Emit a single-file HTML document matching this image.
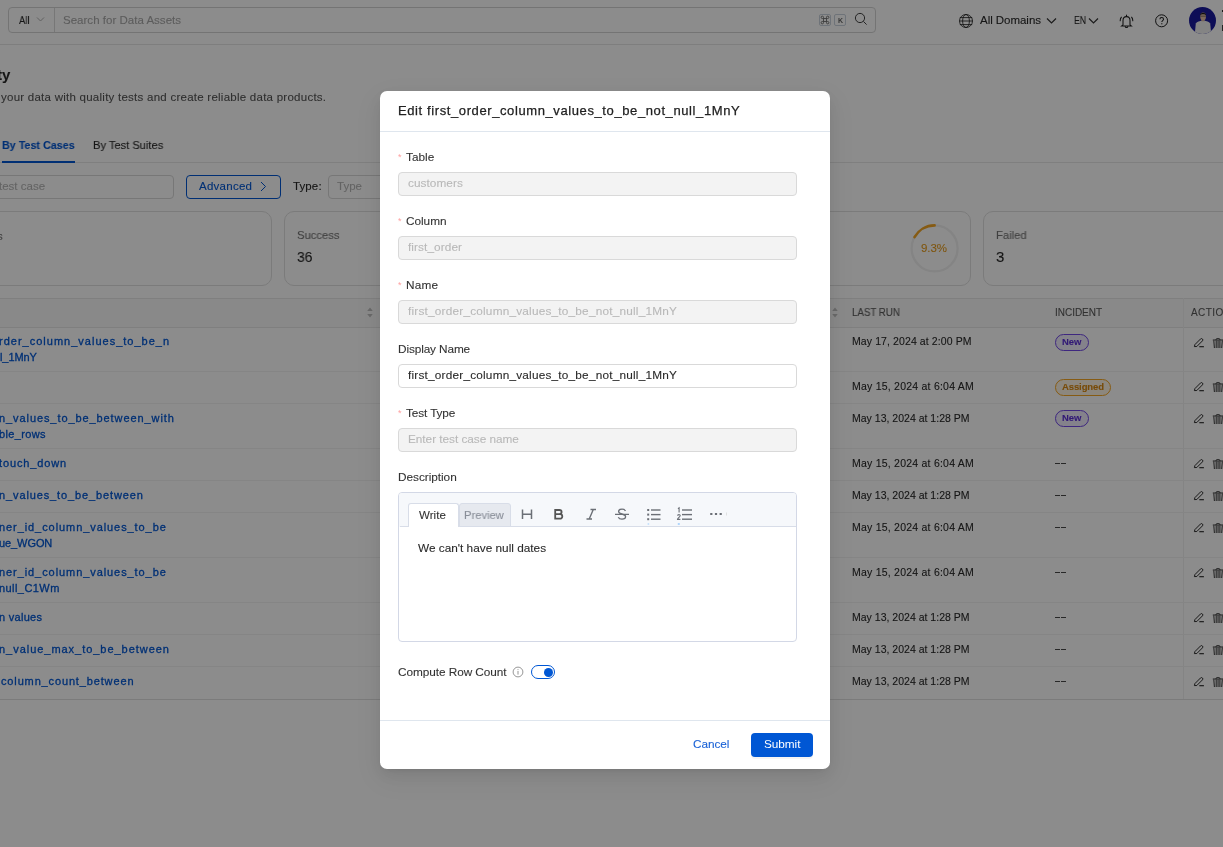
<!DOCTYPE html>
<html><head><meta charset="utf-8"><title>Edit test case</title>
<style>
html,body{margin:0;padding:0;}
body{width:1223px;height:847px;overflow:hidden;position:relative;background:#fff;font-family:"Liberation Sans",sans-serif;}
.t{position:absolute;white-space:nowrap;will-change:transform;-webkit-text-stroke:0.1px;}
.r{position:absolute;}
#page{position:absolute;left:0;top:0;width:1223px;height:847px;overflow:hidden;}
</style></head><body>
<div id="page">
<div class="r" style="left:0px;top:0px;width:1223px;height:44px;background:#fff;border-bottom:1px solid #e6e6e6;box-sizing:border-box;height:45px;"></div>
<div class="r" style="left:8px;top:7px;width:868px;height:26px;border:1px solid #d4d4d4;border-radius:4px;box-sizing:border-box;"></div>
<div class="r" style="left:54px;top:8px;width:1px;height:24px;background:#d9d9d9;"></div>
<div class="t" style="top:13.50px;font-size:11.5px;line-height:12px;color:#292929;left:19.00px;transform:scaleX(0.8203);transform-origin:0.00px 0;">All</div>
<svg class="r" style="left:36px;top:16px" width="9" height="7" viewBox="0 0 9 7"><path d="M1 1.5 L4.5 5 L8 1.5" fill="none" stroke="#b0b0b0" stroke-width="1"/></svg>
<div class="t" style="top:13.50px;font-size:11.5px;line-height:12px;color:#a8a8a8;letter-spacing:0.019px;left:63.00px;">Search for Data Assets</div>
<div class="r" style="left:819px;top:14px;width:12px;height:12px;border:1px solid #c9d2dc;border-radius:2px;box-sizing:border-box;"></div>
<svg class="r" style="left:819px;top:14px" width="12" height="12" viewBox="0 0 12 12"><path d="M4.5 4.5 H7.5 V7.5 H4.5 Z M4.5 4.5 V3.3 A1.2 1.2 0 1 0 3.3 4.5 H4.5 M7.5 4.5 V3.3 A1.2 1.2 0 1 1 8.7 4.5 H7.5 M4.5 7.5 V8.7 A1.2 1.2 0 1 1 3.3 7.5 H4.5 M7.5 7.5 V8.7 A1.2 1.2 0 1 0 8.7 7.5 H7.5" fill="none" stroke="#666" stroke-width="0.85"/></svg>
<div class="r" style="left:834px;top:14px;width:12px;height:12px;border:1px solid #c9d2dc;border-radius:2px;box-sizing:border-box;"></div>
<div class="t" style="top:16.50px;font-size:7px;line-height:7px;color:#666;font-weight:bold;left:838.00px;-webkit-text-stroke:0;">K</div>
<svg class="r" style="left:854px;top:12px" width="14" height="14" viewBox="0 0 14 14"><circle cx="6" cy="6" r="4.6" fill="none" stroke="#3a3a3a" stroke-width="0.95"/><path d="M9.4 9.4 L12.6 12.6" stroke="#3a3a3a" stroke-width="0.95"/></svg>
<svg class="r" style="left:958px;top:13px" width="16" height="16" viewBox="0 0 16 16"><g fill="none" stroke="#222" stroke-width="0.85"><circle cx="8" cy="8" r="6.5"/><ellipse cx="8" cy="8" rx="3.4" ry="6.5"/><path d="M1.8 4.6 H14.2 M1.5 8 H14.5 M1.8 11.6 H14.2"/></g></svg>
<div class="t" style="top:14.30px;font-size:11.5px;line-height:12px;color:#292929;letter-spacing:-0.035px;left:980.00px;">All Domains</div>
<svg class="r" style="left:1046px;top:17px" width="11" height="8" viewBox="0 0 11 8"><path d="M1 1.5 L5.5 6 L10 1.5" fill="none" stroke="#333" stroke-width="1.2"/></svg>
<div class="t" style="top:14.30px;font-size:10.5px;line-height:12px;color:#292929;left:1074.00px;transform:scaleX(0.8219);transform-origin:0.00px 0;">EN</div>
<svg class="r" style="left:1088px;top:17px" width="11" height="8" viewBox="0 0 11 8"><path d="M1 1.5 L5.5 6 L10 1.5" fill="none" stroke="#333" stroke-width="1.2"/></svg>
<svg class="r" style="left:1119px;top:13px" width="15" height="16" viewBox="0 0 15 16"><g fill="none" stroke="#1e1e1e" stroke-width="1.05" stroke-linecap="round"><path d="M4 11.8 V7.6 C4 5.2 5.5 3.6 7.5 3.6 C9.5 3.6 11 5.2 11 7.6 V11.8 L12.4 13 H2.6 Z"/><path d="M6.2 13.4 C6.2 14.8 8.8 14.8 8.8 13.4"/><path d="M2.4 4.2 C1.6 5.2 1.2 6.4 1.2 7.8 M12.6 4.2 C13.4 5.2 13.8 6.4 13.8 7.8"/><path d="M7.5 2 V3.4"/></g></svg>
<svg class="r" style="left:1155px;top:14px" width="14" height="14" viewBox="0 0 14 14"><circle cx="6.6" cy="6.8" r="6" fill="none" stroke="#1e1e1e" stroke-width="1"/><path d="M4.9 5.3 C4.9 4.1 5.7 3.5 6.7 3.5 C7.7 3.5 8.5 4.2 8.5 5.2 C8.5 6.5 6.8 6.6 6.8 8.1" fill="none" stroke="#1e1e1e" stroke-width="1.05"/><rect x="6.25" y="9.2" width="1.1" height="1.1" fill="#1e1e1e"/></svg>
<svg class="r" style="left:1189px;top:7px" width="27" height="27" viewBox="0 0 27 27"><defs><clipPath id="av"><circle cx="13.5" cy="13.5" r="13.5"/></clipPath></defs><circle cx="13.5" cy="13.5" r="13.5" fill="#1a1a9e"/><g clip-path="url(#av)"><path d="M5.8 27 L6.8 16.5 C8 14.6 10.6 13.8 13.4 13.4 L14.8 13.4 C17.6 13.8 20 14.6 21.2 16.5 L22.2 27 Z" fill="#f0f0f0"/><path d="M12.4 11.5 H15.6 V14.2 H12.4 Z" fill="#d9b49c"/><ellipse cx="14.1" cy="9.4" rx="2.9" ry="3.9" fill="#e3bfa6"/><path d="M11.1 8.6 C10.8 5 17.4 4.8 17.1 8.6 C16.4 6.9 11.9 6.9 11.1 8.6 Z" fill="#1b1b1b"/><path d="M11.3 9.2 H16.9" stroke="#333" stroke-width="0.55"/></g></svg>
<div class="r" style="left:1221.5px;top:10px;width:1.5px;height:2px;background:#333;"></div>
<div class="r" style="left:1221.5px;top:25px;width:1.5px;height:6px;background:#444;"></div>
<div class="t" style="top:65.60px;font-size:15px;line-height:17px;color:#292929;font-weight:bold;right:1212.81px;">ty</div>
<div class="t" style="top:91.00px;font-size:11.5px;line-height:12px;color:#555;letter-spacing:0.252px;left:1.00px;">your data with quality tests and create reliable data products.</div>
<div class="t" style="top:139.20px;font-size:11.5px;line-height:12px;color:#0057d4;font-weight:bold;left:2.00px;transform:scaleX(0.9338);transform-origin:0.00px 0;">By Test Cases</div>
<div class="t" style="top:139.20px;font-size:11.5px;line-height:12px;color:#292929;left:92.60px;transform:scaleX(0.9663);transform-origin:0.00px 0;">By Test Suites</div>
<div class="r" style="left:0px;top:162px;width:1223px;height:1px;background:#e8e8e8;"></div>
<div class="r" style="left:2px;top:161px;width:73px;height:2px;background:#0057d4;"></div>
<div class="r" style="left:-10px;top:175px;width:183.5px;height:24px;border:1px solid #d9d9d9;border-radius:4px;box-sizing:border-box;"></div>
<div class="t" style="top:180.20px;font-size:11.5px;line-height:12px;color:#b5b5b5;right:1177.98px;">test case</div>
<div class="r" style="left:186px;top:175px;width:95px;height:24px;border:1px solid #0057d4;border-radius:4px;box-sizing:border-box;"></div>
<div class="t" style="top:180.20px;font-size:11.5px;line-height:12px;color:#0057d4;letter-spacing:0.264px;left:199.00px;">Advanced</div>
<svg class="r" style="left:259px;top:181px" width="9" height="11" viewBox="0 0 9 11"><path d="M2 1 L6.5 5.5 L2 10" fill="none" stroke="#0057d4" stroke-width="1"/></svg>
<div class="t" style="top:180.20px;font-size:11.5px;line-height:12px;color:#292929;letter-spacing:0.112px;left:293.00px;">Type:</div>
<div class="r" style="left:328px;top:175px;width:120px;height:24px;border:1px solid #d9d9d9;border-radius:4px;box-sizing:border-box;"></div>
<div class="t" style="top:180.20px;font-size:11.5px;line-height:12px;color:#b5b5b5;letter-spacing:0.017px;left:337.00px;">Type</div>
<div class="r" style="left:-20px;top:211px;width:292px;height:75px;border:1px solid #e0e0e0;border-radius:10px;box-sizing:border-box;"></div>
<div class="t" style="top:230.00px;font-size:11.5px;line-height:12px;color:#757575;right:1220.51px;">Tests</div>
<div class="r" style="left:284px;top:211px;width:300px;height:75px;border:1px solid #e0e0e0;border-radius:10px;box-sizing:border-box;"></div>
<div class="t" style="top:229.20px;font-size:11.5px;line-height:12px;color:#757575;left:296.80px;transform:scaleX(0.9781);transform-origin:0.00px 0;">Success</div>
<div class="t" style="top:248.20px;font-size:15px;line-height:17px;color:#292929;left:296.80px;transform:scaleX(0.9281);transform-origin:0.00px 0;">36</div>
<div class="r" style="left:600px;top:211px;width:371px;height:75px;border:1px solid #e0e0e0;border-radius:10px;box-sizing:border-box;"></div>
<svg class="r" style="left:908px;top:222px" width="54" height="54" viewBox="0 0 54 54"><circle cx="26.6" cy="26.4" r="23" fill="none" stroke="#f0f0f0" stroke-width="2.2"/><path d="M26.6 3.4 A23 23 0 0 0 6.5 15.2" fill="none" stroke="#f5a623" stroke-width="2.6" stroke-linecap="round"/></svg>
<div class="t" style="top:242.40px;font-size:11.5px;line-height:12px;color:#e69a1a;letter-spacing:-0.067px;left:921.00px;">9.3%</div>
<div class="r" style="left:983px;top:211px;width:300px;height:75px;border:1px solid #e0e0e0;border-radius:10px;box-sizing:border-box;"></div>
<div class="t" style="top:229.40px;font-size:11.5px;line-height:12px;color:#757575;left:996.40px;transform:scaleX(0.9776);transform-origin:0.00px 0;">Failed</div>
<div class="t" style="top:247.90px;font-size:15px;line-height:17px;color:#292929;left:996.40px;">3</div>
<div class="r" style="left:0px;top:298px;width:1223px;height:30px;background:#fafafa;border-top:1px solid #e8e8e8;border-bottom:1px solid #e8e8e8;box-sizing:border-box;"></div>
<svg class="r" style="left:366.5px;top:307px" width="6" height="11" viewBox="0 0 6 11"><path d="M3 0.6 L5.8 4 H0.2 Z M3 10.4 L5.8 7 H0.2 Z" fill="#bfbfbf"/></svg>
<svg class="r" style="left:832.4px;top:307px" width="6" height="11" viewBox="0 0 6 11"><path d="M3 0.6 L5.8 4 H0.2 Z M3 10.4 L5.8 7 H0.2 Z" fill="#bfbfbf"/></svg>
<div class="t" style="top:307.10px;font-size:10px;line-height:11px;color:#595959;left:851.70px;transform:scaleX(0.9726);transform-origin:0.00px 0;">LAST RUN</div>
<div class="t" style="top:307.10px;font-size:10px;line-height:11px;color:#595959;letter-spacing:-0.029px;left:1055.00px;">INCIDENT</div>
<div class="t" style="top:307.10px;font-size:10px;line-height:11px;color:#595959;left:1191.00px;letter-spacing:0.4px;">ACTIONS</div>
<div class="r" style="left:1183px;top:298px;width:1px;height:401px;background:#f0f0f0;"></div>
<div class="r" style="left:0px;top:371px;width:1223px;height:1px;background:#f2f2f2;"></div>
<div class="r" style="left:0px;top:403px;width:1223px;height:1px;background:#f2f2f2;"></div>
<div class="r" style="left:0px;top:448px;width:1223px;height:1px;background:#f2f2f2;"></div>
<div class="r" style="left:0px;top:480px;width:1223px;height:1px;background:#f2f2f2;"></div>
<div class="r" style="left:0px;top:512px;width:1223px;height:1px;background:#f2f2f2;"></div>
<div class="r" style="left:0px;top:557px;width:1223px;height:1px;background:#f2f2f2;"></div>
<div class="r" style="left:0px;top:602px;width:1223px;height:1px;background:#f2f2f2;"></div>
<div class="r" style="left:0px;top:634px;width:1223px;height:1px;background:#f2f2f2;"></div>
<div class="r" style="left:0px;top:666px;width:1223px;height:1px;background:#f2f2f2;"></div>
<div class="r" style="left:0px;top:699px;width:1223px;height:1px;background:#e0e0e0;"></div>
<div class="t" style="top:335.30px;font-size:11px;line-height:12px;color:#0057d4;letter-spacing:1.006px;right:1052.50px;-webkit-text-stroke:0.3px #0057d4;">rder_column_values_to_be_n</div>
<div class="t" style="top:351.30px;font-size:11px;line-height:12px;color:#0057d4;letter-spacing:-0.080px;right:1185.78px;-webkit-text-stroke:0.3px #0057d4;">l_1MnY</div>
<div class="t" style="top:335.30px;font-size:10.5px;line-height:12px;color:#292929;letter-spacing:0.100px;left:851.70px;">May 17, 2024 at 2:00 PM</div>
<div class="r" style="left:1055px;top:334px;width:34px;height:16.5px;border:1px solid #7147e8;background:#f1edfd;border-radius:9px;box-sizing:border-box;"></div>
<div class="t" style="top:335.80px;font-size:9.5px;line-height:11px;color:#5b2fd6;font-weight:bold;letter-spacing:-0.050px;left:1062.00px;">New</div>
<svg class="r" style="left:1193px;top:337px" width="12" height="12" viewBox="0 0 12 12"><g fill="none" stroke="#222" stroke-width="0.95"><path d="M1.4 9.6 L1.9 7.6 L7.6 1.9 A1.35 1.35 0 0 1 9.5 3.8 L3.8 9.5 Z"/><path d="M6.3 9.7 H10.9" stroke-width="1.1"/></g></svg>
<svg class="r" style="left:1211.5px;top:337px" width="12" height="12" viewBox="0 0 12 12"><g fill="none" stroke="#222" stroke-width="0.9"><path d="M0.8 3 H11.2 M3.8 3 C3.8 1 8.2 1 8.2 3"/><path d="M1.8 3.5 L2.4 11 M4.2 3.5 V11 M6.05 3.5 V11 M7.9 3.5 V11 M10.3 3.5 L9.7 11"/></g></svg>
<div class="t" style="top:379.70px;font-size:10.5px;line-height:12px;color:#292929;letter-spacing:0.230px;left:851.70px;">May 15, 2024 at 6:04 AM</div>
<div class="r" style="left:1055px;top:378.5px;width:56px;height:17px;border:1px solid #f5a623;background:#fff6e6;border-radius:9px;box-sizing:border-box;"></div>
<div class="t" style="top:381.00px;font-size:9.5px;line-height:11px;color:#d9880f;font-weight:bold;letter-spacing:-0.107px;left:1062.00px;">Assigned</div>
<svg class="r" style="left:1193px;top:381px" width="12" height="12" viewBox="0 0 12 12"><g fill="none" stroke="#222" stroke-width="0.95"><path d="M1.4 9.6 L1.9 7.6 L7.6 1.9 A1.35 1.35 0 0 1 9.5 3.8 L3.8 9.5 Z"/><path d="M6.3 9.7 H10.9" stroke-width="1.1"/></g></svg>
<svg class="r" style="left:1211.5px;top:381px" width="12" height="12" viewBox="0 0 12 12"><g fill="none" stroke="#222" stroke-width="0.9"><path d="M0.8 3 H11.2 M3.8 3 C3.8 1 8.2 1 8.2 3"/><path d="M1.8 3.5 L2.4 11 M4.2 3.5 V11 M6.05 3.5 V11 M7.9 3.5 V11 M10.3 3.5 L9.7 11"/></g></svg>
<div class="t" style="top:411.70px;font-size:11px;line-height:12px;color:#0057d4;letter-spacing:0.917px;right:1047.77px;-webkit-text-stroke:0.3px #0057d4;">n_values_to_be_between_with</div>
<div class="t" style="top:427.70px;font-size:11px;line-height:12px;color:#0057d4;letter-spacing:0.371px;right:1176.61px;-webkit-text-stroke:0.3px #0057d4;">ble_rows</div>
<div class="t" style="top:411.70px;font-size:10.5px;line-height:12px;color:#292929;letter-spacing:0.009px;left:851.70px;">May 13, 2024 at 1:28 PM</div>
<div class="r" style="left:1055px;top:410px;width:34px;height:16.5px;border:1px solid #7147e8;background:#f1edfd;border-radius:9px;box-sizing:border-box;"></div>
<div class="t" style="top:412.20px;font-size:9.5px;line-height:11px;color:#5b2fd6;font-weight:bold;letter-spacing:-0.050px;left:1062.00px;">New</div>
<svg class="r" style="left:1193px;top:413px" width="12" height="12" viewBox="0 0 12 12"><g fill="none" stroke="#222" stroke-width="0.95"><path d="M1.4 9.6 L1.9 7.6 L7.6 1.9 A1.35 1.35 0 0 1 9.5 3.8 L3.8 9.5 Z"/><path d="M6.3 9.7 H10.9" stroke-width="1.1"/></g></svg>
<svg class="r" style="left:1211.5px;top:413px" width="12" height="12" viewBox="0 0 12 12"><g fill="none" stroke="#222" stroke-width="0.9"><path d="M0.8 3 H11.2 M3.8 3 C3.8 1 8.2 1 8.2 3"/><path d="M1.8 3.5 L2.4 11 M4.2 3.5 V11 M6.05 3.5 V11 M7.9 3.5 V11 M10.3 3.5 L9.7 11"/></g></svg>
<div class="t" style="top:456.70px;font-size:11px;line-height:12px;color:#0057d4;letter-spacing:0.872px;right:1155.55px;-webkit-text-stroke:0.3px #0057d4;">touch_down</div>
<div class="t" style="top:456.70px;font-size:10.5px;line-height:12px;color:#292929;letter-spacing:0.230px;left:851.70px;">May 15, 2024 at 6:04 AM</div>
<div class="r" style="left:1054.8px;top:463.2px;width:5.4px;height:1.1px;background:#4a4a4a;"></div>
<div class="r" style="left:1061.4px;top:463.2px;width:4.8px;height:1.1px;background:#4a4a4a;"></div>
<svg class="r" style="left:1193px;top:458px" width="12" height="12" viewBox="0 0 12 12"><g fill="none" stroke="#222" stroke-width="0.95"><path d="M1.4 9.6 L1.9 7.6 L7.6 1.9 A1.35 1.35 0 0 1 9.5 3.8 L3.8 9.5 Z"/><path d="M6.3 9.7 H10.9" stroke-width="1.1"/></g></svg>
<svg class="r" style="left:1211.5px;top:458px" width="12" height="12" viewBox="0 0 12 12"><g fill="none" stroke="#222" stroke-width="0.9"><path d="M0.8 3 H11.2 M3.8 3 C3.8 1 8.2 1 8.2 3"/><path d="M1.8 3.5 L2.4 11 M4.2 3.5 V11 M6.05 3.5 V11 M7.9 3.5 V11 M10.3 3.5 L9.7 11"/></g></svg>
<div class="t" style="top:488.70px;font-size:11px;line-height:12px;color:#0057d4;letter-spacing:0.881px;right:1078.83px;-webkit-text-stroke:0.3px #0057d4;">n_values_to_be_between</div>
<div class="t" style="top:488.70px;font-size:10.5px;line-height:12px;color:#292929;letter-spacing:0.009px;left:851.70px;">May 13, 2024 at 1:28 PM</div>
<div class="r" style="left:1054.8px;top:495.2px;width:5.4px;height:1.1px;background:#4a4a4a;"></div>
<div class="r" style="left:1061.4px;top:495.2px;width:4.8px;height:1.1px;background:#4a4a4a;"></div>
<svg class="r" style="left:1193px;top:490px" width="12" height="12" viewBox="0 0 12 12"><g fill="none" stroke="#222" stroke-width="0.95"><path d="M1.4 9.6 L1.9 7.6 L7.6 1.9 A1.35 1.35 0 0 1 9.5 3.8 L3.8 9.5 Z"/><path d="M6.3 9.7 H10.9" stroke-width="1.1"/></g></svg>
<svg class="r" style="left:1211.5px;top:490px" width="12" height="12" viewBox="0 0 12 12"><g fill="none" stroke="#222" stroke-width="0.9"><path d="M0.8 3 H11.2 M3.8 3 C3.8 1 8.2 1 8.2 3"/><path d="M1.8 3.5 L2.4 11 M4.2 3.5 V11 M6.05 3.5 V11 M7.9 3.5 V11 M10.3 3.5 L9.7 11"/></g></svg>
<div class="t" style="top:520.70px;font-size:11px;line-height:12px;color:#0057d4;letter-spacing:0.924px;right:1055.86px;-webkit-text-stroke:0.3px #0057d4;">ner_id_column_values_to_be</div>
<div class="t" style="top:536.70px;font-size:11px;line-height:12px;color:#0057d4;letter-spacing:-0.083px;right:1170.39px;-webkit-text-stroke:0.3px #0057d4;">ue_WGON</div>
<div class="t" style="top:520.70px;font-size:10.5px;line-height:12px;color:#292929;letter-spacing:0.230px;left:851.70px;">May 15, 2024 at 6:04 AM</div>
<div class="r" style="left:1054.8px;top:527.2px;width:5.4px;height:1.1px;background:#4a4a4a;"></div>
<div class="r" style="left:1061.4px;top:527.2px;width:4.8px;height:1.1px;background:#4a4a4a;"></div>
<svg class="r" style="left:1193px;top:522px" width="12" height="12" viewBox="0 0 12 12"><g fill="none" stroke="#222" stroke-width="0.95"><path d="M1.4 9.6 L1.9 7.6 L7.6 1.9 A1.35 1.35 0 0 1 9.5 3.8 L3.8 9.5 Z"/><path d="M6.3 9.7 H10.9" stroke-width="1.1"/></g></svg>
<svg class="r" style="left:1211.5px;top:522px" width="12" height="12" viewBox="0 0 12 12"><g fill="none" stroke="#222" stroke-width="0.9"><path d="M0.8 3 H11.2 M3.8 3 C3.8 1 8.2 1 8.2 3"/><path d="M1.8 3.5 L2.4 11 M4.2 3.5 V11 M6.05 3.5 V11 M7.9 3.5 V11 M10.3 3.5 L9.7 11"/></g></svg>
<div class="t" style="top:565.70px;font-size:11px;line-height:12px;color:#0057d4;letter-spacing:0.924px;right:1055.86px;-webkit-text-stroke:0.3px #0057d4;">ner_id_column_values_to_be</div>
<div class="t" style="top:581.70px;font-size:11px;line-height:12px;color:#0057d4;letter-spacing:0.431px;right:1162.87px;-webkit-text-stroke:0.3px #0057d4;">null_C1Wm</div>
<div class="t" style="top:565.70px;font-size:10.5px;line-height:12px;color:#292929;letter-spacing:0.230px;left:851.70px;">May 15, 2024 at 6:04 AM</div>
<div class="r" style="left:1054.8px;top:572.2px;width:5.4px;height:1.1px;background:#4a4a4a;"></div>
<div class="r" style="left:1061.4px;top:572.2px;width:4.8px;height:1.1px;background:#4a4a4a;"></div>
<svg class="r" style="left:1193px;top:567px" width="12" height="12" viewBox="0 0 12 12"><g fill="none" stroke="#222" stroke-width="0.95"><path d="M1.4 9.6 L1.9 7.6 L7.6 1.9 A1.35 1.35 0 0 1 9.5 3.8 L3.8 9.5 Z"/><path d="M6.3 9.7 H10.9" stroke-width="1.1"/></g></svg>
<svg class="r" style="left:1211.5px;top:567px" width="12" height="12" viewBox="0 0 12 12"><g fill="none" stroke="#222" stroke-width="0.9"><path d="M0.8 3 H11.2 M3.8 3 C3.8 1 8.2 1 8.2 3"/><path d="M1.8 3.5 L2.4 11 M4.2 3.5 V11 M6.05 3.5 V11 M7.9 3.5 V11 M10.3 3.5 L9.7 11"/></g></svg>
<div class="t" style="top:610.70px;font-size:11px;line-height:12px;color:#0057d4;letter-spacing:0.279px;right:1180.40px;-webkit-text-stroke:0.3px #0057d4;">n values</div>
<div class="t" style="top:610.70px;font-size:10.5px;line-height:12px;color:#292929;letter-spacing:0.009px;left:851.70px;">May 13, 2024 at 1:28 PM</div>
<div class="r" style="left:1054.8px;top:617.2px;width:5.4px;height:1.1px;background:#4a4a4a;"></div>
<div class="r" style="left:1061.4px;top:617.2px;width:4.8px;height:1.1px;background:#4a4a4a;"></div>
<svg class="r" style="left:1193px;top:612px" width="12" height="12" viewBox="0 0 12 12"><g fill="none" stroke="#222" stroke-width="0.95"><path d="M1.4 9.6 L1.9 7.6 L7.6 1.9 A1.35 1.35 0 0 1 9.5 3.8 L3.8 9.5 Z"/><path d="M6.3 9.7 H10.9" stroke-width="1.1"/></g></svg>
<svg class="r" style="left:1211.5px;top:612px" width="12" height="12" viewBox="0 0 12 12"><g fill="none" stroke="#222" stroke-width="0.9"><path d="M0.8 3 H11.2 M3.8 3 C3.8 1 8.2 1 8.2 3"/><path d="M1.8 3.5 L2.4 11 M4.2 3.5 V11 M6.05 3.5 V11 M7.9 3.5 V11 M10.3 3.5 L9.7 11"/></g></svg>
<div class="t" style="top:642.70px;font-size:11px;line-height:12px;color:#0057d4;letter-spacing:0.967px;right:1052.65px;-webkit-text-stroke:0.3px #0057d4;">n_value_max_to_be_between</div>
<div class="t" style="top:642.70px;font-size:10.5px;line-height:12px;color:#292929;letter-spacing:0.009px;left:851.70px;">May 13, 2024 at 1:28 PM</div>
<div class="r" style="left:1054.8px;top:649.2px;width:5.4px;height:1.1px;background:#4a4a4a;"></div>
<div class="r" style="left:1061.4px;top:649.2px;width:4.8px;height:1.1px;background:#4a4a4a;"></div>
<svg class="r" style="left:1193px;top:644px" width="12" height="12" viewBox="0 0 12 12"><g fill="none" stroke="#222" stroke-width="0.95"><path d="M1.4 9.6 L1.9 7.6 L7.6 1.9 A1.35 1.35 0 0 1 9.5 3.8 L3.8 9.5 Z"/><path d="M6.3 9.7 H10.9" stroke-width="1.1"/></g></svg>
<svg class="r" style="left:1211.5px;top:644px" width="12" height="12" viewBox="0 0 12 12"><g fill="none" stroke="#222" stroke-width="0.9"><path d="M0.8 3 H11.2 M3.8 3 C3.8 1 8.2 1 8.2 3"/><path d="M1.8 3.5 L2.4 11 M4.2 3.5 V11 M6.05 3.5 V11 M7.9 3.5 V11 M10.3 3.5 L9.7 11"/></g></svg>
<div class="t" style="top:674.70px;font-size:11px;line-height:12px;color:#0057d4;letter-spacing:0.858px;right:1088.35px;-webkit-text-stroke:0.3px #0057d4;">column_count_between</div>
<div class="t" style="top:674.70px;font-size:10.5px;line-height:12px;color:#292929;letter-spacing:0.009px;left:851.70px;">May 13, 2024 at 1:28 PM</div>
<div class="r" style="left:1054.8px;top:681.2px;width:5.4px;height:1.1px;background:#4a4a4a;"></div>
<div class="r" style="left:1061.4px;top:681.2px;width:4.8px;height:1.1px;background:#4a4a4a;"></div>
<svg class="r" style="left:1193px;top:676px" width="12" height="12" viewBox="0 0 12 12"><g fill="none" stroke="#222" stroke-width="0.95"><path d="M1.4 9.6 L1.9 7.6 L7.6 1.9 A1.35 1.35 0 0 1 9.5 3.8 L3.8 9.5 Z"/><path d="M6.3 9.7 H10.9" stroke-width="1.1"/></g></svg>
<svg class="r" style="left:1211.5px;top:676px" width="12" height="12" viewBox="0 0 12 12"><g fill="none" stroke="#222" stroke-width="0.9"><path d="M0.8 3 H11.2 M3.8 3 C3.8 1 8.2 1 8.2 3"/><path d="M1.8 3.5 L2.4 11 M4.2 3.5 V11 M6.05 3.5 V11 M7.9 3.5 V11 M10.3 3.5 L9.7 11"/></g></svg>
</div>
<div class="r" style="left:0px;top:0px;width:1223px;height:847px;background:rgba(0,0,0,0.45);"></div>
<div class="r" style="left:380px;top:91px;width:450px;height:678px;background:#fff;border-radius:7px;box-shadow:0 6px 16px rgba(0,0,0,0.08),0 3px 6px -4px rgba(0,0,0,0.12),0 9px 28px 8px rgba(0,0,0,0.05);"></div>
<div class="t" style="top:103.40px;font-size:13px;line-height:15px;color:#212121;letter-spacing:0.602px;left:398.00px;-webkit-text-stroke:0.25px #212121;">Edit first_order_column_values_to_be_not_null_1MnY</div>
<div class="r" style="left:380px;top:131px;width:450px;height:1px;background:#dfe6ee;"></div>
<div class="t" style="top:151.50px;font-size:9px;line-height:10px;color:#ffa0a0;left:398.40px;-webkit-text-stroke:0;">*</div>
<div class="t" style="top:150.00px;font-size:11.8px;line-height:14px;color:#333;letter-spacing:-0.000px;left:405.80px;">Table</div>
<div class="r" style="left:398px;top:172px;width:399px;height:24px;background:#f3f3f3;border:1px solid #d9d9d9;border-radius:4px;box-sizing:border-box;"></div>
<div class="t" style="top:176.00px;font-size:11.8px;line-height:14px;color:#b8b8b8;letter-spacing:0.056px;left:407.60px;">customers</div>
<div class="t" style="top:215.50px;font-size:9px;line-height:10px;color:#ffa0a0;left:398.40px;-webkit-text-stroke:0;">*</div>
<div class="t" style="top:214.00px;font-size:11.8px;line-height:14px;color:#333;letter-spacing:-0.030px;left:405.80px;">Column</div>
<div class="r" style="left:398px;top:236px;width:399px;height:24px;background:#f3f3f3;border:1px solid #d9d9d9;border-radius:4px;box-sizing:border-box;"></div>
<div class="t" style="top:240.00px;font-size:11.8px;line-height:14px;color:#b8b8b8;letter-spacing:0.090px;left:407.60px;">first_order</div>
<div class="t" style="top:279.50px;font-size:9px;line-height:10px;color:#ffa0a0;left:398.40px;-webkit-text-stroke:0;">*</div>
<div class="t" style="top:278.00px;font-size:11.8px;line-height:14px;color:#333;letter-spacing:0.167px;left:405.80px;">Name</div>
<div class="r" style="left:398px;top:300px;width:399px;height:24px;background:#f3f3f3;border:1px solid #d9d9d9;border-radius:4px;box-sizing:border-box;"></div>
<div class="t" style="top:304.00px;font-size:11.8px;line-height:14px;color:#b8b8b8;letter-spacing:0.208px;left:407.60px;">first_order_column_values_to_be_not_null_1MnY</div>
<div class="t" style="top:342.00px;font-size:11.8px;line-height:14px;color:#333;letter-spacing:-0.114px;left:398.30px;">Display Name</div>
<div class="r" style="left:398px;top:364px;width:399px;height:24px;background:#fff;border:1px solid #d9d9d9;border-radius:4px;box-sizing:border-box;"></div>
<div class="t" style="top:368.00px;font-size:11.8px;line-height:14px;color:#292929;letter-spacing:0.208px;left:407.60px;">first_order_column_values_to_be_not_null_1MnY</div>
<div class="t" style="top:407.50px;font-size:9px;line-height:10px;color:#ffa0a0;left:398.40px;-webkit-text-stroke:0;">*</div>
<div class="t" style="top:406.00px;font-size:11.8px;line-height:14px;color:#333;letter-spacing:-0.113px;left:405.80px;">Test Type</div>
<div class="r" style="left:398px;top:428px;width:399px;height:24px;background:#f3f3f3;border:1px solid #d9d9d9;border-radius:4px;box-sizing:border-box;"></div>
<div class="t" style="top:432.00px;font-size:11.8px;line-height:14px;color:#b8b8b8;letter-spacing:-0.032px;left:407.60px;">Enter test case name</div>
<div class="t" style="top:470.00px;font-size:11.8px;line-height:14px;color:#333;letter-spacing:-0.030px;left:398.30px;">Description</div>
<div class="r" style="left:398px;top:492px;width:398.5px;height:150px;border:1px solid #d3d8e6;border-radius:4px;box-sizing:border-box;"></div>
<div class="r" style="left:399px;top:493px;width:396.5px;height:33.5px;background:#f6f8fb;border-radius:3px 3px 0 0;"></div>
<div class="r" style="left:399.5px;top:526px;width:396px;height:1px;background:#d8dde8;"></div>
<div class="r" style="left:407.5px;top:503px;width:51px;height:24px;background:#fff;border:1px solid #d8dde8;border-bottom:none;border-radius:3px 3px 0 0;box-sizing:border-box;"></div>
<div class="r" style="left:458.5px;top:503px;width:52px;height:23.5px;background:#e6e9ef;border:1px solid #d8dde8;border-radius:3px 3px 0 0;box-sizing:border-box;"></div>
<div class="t" style="top:509.10px;font-size:11.5px;line-height:12px;color:#333;letter-spacing:0.050px;left:419.00px;">Write</div>
<div class="t" style="top:509.10px;font-size:11.5px;line-height:12px;color:#8a8f99;left:464.30px;transform:scaleX(0.9744);transform-origin:0.00px 0;">Preview</div>
<svg class="r" style="left:520px;top:506px" width="80" height="16" viewBox="0 0 80 16"><g fill="none" stroke="#6b6f76" stroke-width="1.5"><path d="M2.5 3.5 V13 M11.5 3.5 V13 M2.5 8.3 H11.5"/></g></svg>
<svg class="r" style="left:552px;top:506px" width="14" height="16" viewBox="0 0 14 16"><path d="M3.2 4 H7.4 A2.2 2.05 0 0 1 7.4 8.1 H3.2 Z M3.2 8.1 H7.9 A2.4 2.3 0 0 1 7.9 12.7 H3.2 Z" fill="none" stroke="#555" stroke-width="1.8"/></svg>
<svg class="r" style="left:584px;top:506px" width="14" height="16" viewBox="0 0 14 16"><path d="M6.5 3.5 H12 M2.5 13 H8 M9.3 3.5 L5.2 13" fill="none" stroke="#6b6f76" stroke-width="1.4"/></svg>
<svg class="r" style="left:614px;top:506px" width="16" height="16" viewBox="0 0 16 16"><path d="M11.5 5 C10.8 3.6 9.5 3.2 8 3.2 C6 3.2 4.6 4.2 4.6 5.6 C4.6 8.6 11.6 7.4 11.6 10.6 C11.6 12.2 10 13.2 8 13.2 C6.2 13.2 4.9 12.6 4.3 11.2 M1 8.3 H15" fill="none" stroke="#6b6f76" stroke-width="1.3"/></svg>
<svg class="r" style="left:646px;top:506px" width="16" height="20" viewBox="0 0 16 20"><g fill="#6b6f76"><rect x="1.2" y="3" width="2" height="2"/><rect x="1.2" y="7.6" width="2" height="2"/><rect x="1.2" y="12.2" width="2" height="2"/><rect x="5" y="3.3" width="9.5" height="1.4"/><rect x="5" y="7.9" width="9.5" height="1.4"/><rect x="5" y="12.5" width="9.5" height="1.4"/></g><rect x="1.6" y="17.6" width="1.6" height="0.8" fill="#8ac4ff"/></svg>
<svg class="r" style="left:676px;top:505px" width="18" height="21" viewBox="0 0 18 21"><g fill="#6b6f76"><rect x="6" y="4.3" width="10" height="1.4"/><rect x="6" y="8.9" width="10" height="1.4"/><rect x="6" y="13.5" width="10" height="1.4"/></g><g fill="none" stroke="#6b6f76" stroke-width="1.1"><path d="M1.9 3.6 L3.1 2.8 V7.6"/><path d="M1.5 10.6 C1.6 9.3 4.3 9.2 4.2 10.7 C4.1 11.8 1.6 13 1.5 14.4 H4.4"/></g><rect x="1.8" y="18.6" width="2" height="0.8" fill="#4aa3ff"/></svg>
<svg class="r" style="left:708px;top:510px" width="20" height="8" viewBox="0 0 20 8"><g fill="#6b6f76"><rect x="2.2" y="3" width="2.2" height="2"/><rect x="6.9" y="3" width="2.2" height="2"/><rect x="11.6" y="3" width="2.2" height="2"/></g><rect x="18.3" y="2.5" width="0.6" height="3" fill="#d0d0d0"/></svg>
<div class="t" style="top:541.10px;font-size:11.8px;line-height:14px;color:#292929;letter-spacing:0.004px;left:417.80px;">We can&#x27;t have null dates</div>
<div class="t" style="top:664.50px;font-size:11.8px;line-height:14px;color:#333;letter-spacing:-0.059px;left:398.20px;">Compute Row Count</div>
<svg class="r" style="left:512px;top:666px" width="12" height="12" viewBox="0 0 12 12"><circle cx="6" cy="6" r="4.9" fill="none" stroke="#8a8a8a" stroke-width="0.9"/><rect x="5.55" y="5" width="0.9" height="3.6" fill="#8a8a8a"/><rect x="5.55" y="3.2" width="0.9" height="0.9" fill="#8a8a8a"/></svg>
<div class="r" style="left:531px;top:665.3px;width:24px;height:13.8px;border:1.3px solid #0057d4;border-radius:7px;box-sizing:border-box;background:#fff;"></div>
<div class="r" style="left:543.7px;top:667.5px;width:9.4px;height:9.4px;background:#0057d4;border-radius:50%;"></div>
<div class="r" style="left:380px;top:720px;width:450px;height:1px;background:#dfe6ee;"></div>
<div class="t" style="top:737.20px;font-size:11.8px;line-height:14px;color:#1a62d6;letter-spacing:-0.050px;left:693.00px;">Cancel</div>
<div class="r" style="left:751px;top:733px;width:62px;height:24px;background:#0057d4;border-radius:4px;box-shadow:0 2px 0 rgba(0,0,0,0.045);"></div>
<div class="t" style="top:737.20px;font-size:11.8px;line-height:14px;color:#fff;letter-spacing:-0.050px;left:763.50px;-webkit-text-stroke:0;">Submit</div>
</body></html>
